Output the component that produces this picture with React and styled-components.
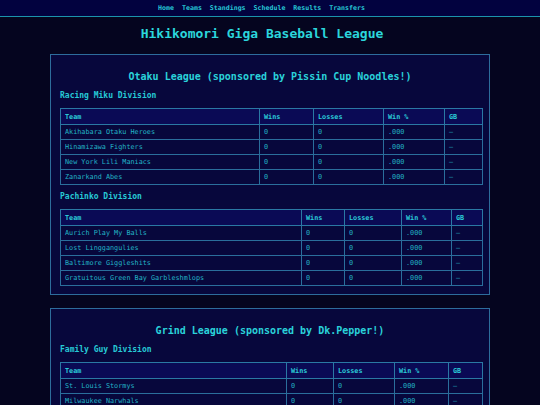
import React from "react";
import styled, { createGlobalStyle } from "styled-components";

const Global = createGlobalStyle`
  html, body { margin: 0; padding: 0; background: #05051f; }
  body { font-family: "DejaVu Sans Mono", "Liberation Mono", monospace; color: #22c8d4; overflow: hidden; }
`;

const Nav = styled.nav`
  height: 16px;
  background: #02023f;
  border-bottom: 1.5px solid #1b94ac;
  display: flex;
  justify-content: center;
  align-items: center;
  gap: 8px;
  padding-right: 17px;
`;

const NavLink = styled.a`
  font-size: 6.6px;
  font-weight: bold;
  color: #26c6d6;
  text-decoration: none;
  line-height: 1;
`;

const Title = styled.h1`
  margin: 0;
  padding: 9px 16px 0 0;
  font-size: 13px;
  line-height: 16px;
  font-weight: bold;
  text-align: center;
  color: #2bd6dc;
`;

const Main = styled.main`
  display: flex;
  flex-direction: column;
  align-items: center;
  gap: 13px;
  padding-top: 12px;
`;

const League = styled.section`
  width: 440px;
  box-sizing: border-box;
  background: #07073c;
  border: 1px solid #2d6c9c;
  padding: 9px 9px 8px;
`;

const LeagueTitle = styled.h2`
  margin: 7px 0 8px;
  font-size: 10px;
  line-height: 12px;
  font-weight: bold;
  text-align: center;
  color: #2ad2da;
`;

const DivisionTitle = styled.h3`
  margin: 0 0 7px;
  font-size: 8px;
  line-height: 10px;
  font-weight: bold;
  color: #26cad6;
`;

const Division = styled.div`
  & + & { margin-top: 7px; }
`;

const Table = styled.table`
  width: 100%;
  table-layout: fixed;
  border-collapse: collapse;
  border: 1px solid #2a78a4;
`;

const Col = styled.col`
  width: ${(p) => p.$w}px;
`;

const HeadCell = styled.th`
  height: 15px;
  padding: 0 4px;
  text-align: left;
  font-size: 6.8px;
  font-weight: bold;
  color: #2acad8;
  background: #0a0a55;
  border: 1px solid #2a78a4;
`;

const Cell = styled.td`
  height: 14px;
  padding: 0 4px;
  font-size: 6.8px;
  color: #22b4c6;
  border: 1px solid #2a6e9c;
  white-space: nowrap;
`;

const leagues = [
  {
    name: "Otaku League (sponsored by Pissin Cup Noodles!)",
    divisions: [
      {
        name: "Racing Miku Division",
        cols: [199, 54, 70, 61, 38],
        teams: ["Akihabara Otaku Heroes", "Hinamizawa Fighters", "New York Lili Maniacs", "Zanarkand Abes"],
      },
      {
        name: "Pachinko Division",
        cols: [241, 43, 57, 50, 31],
        teams: ["Aurich Play My Balls", "Lost Linggangulies", "Baltimore Giggleshits", "Gratuitous Green Bay Garbleshmlops"],
      },
    ],
  },
  {
    name: "Grind League (sponsored by Dk.Pepper!)",
    divisions: [
      {
        name: "Family Guy Division",
        cols: [226, 47, 61, 54, 34],
        teams: ["St. Louis Stormys", "Milwaukee Narwhals", "Quahog Clams", "Spooner Street Giggities"],
      },
    ],
  },
];

const navItems = ["Home", "Teams", "Standings", "Schedule", "Results", "Transfers"];

function Standings({ division }) {
  return (
    <Division>
      <DivisionTitle>{division.name}</DivisionTitle>
      <Table>
        <colgroup>
          {division.cols.map((w, i) => (
            <Col key={i} $w={w} />
          ))}
        </colgroup>
        <thead>
          <tr>
            <HeadCell>Team</HeadCell>
            <HeadCell>Wins</HeadCell>
            <HeadCell>Losses</HeadCell>
            <HeadCell>Win %</HeadCell>
            <HeadCell>GB</HeadCell>
          </tr>
        </thead>
        <tbody>
          {division.teams.map((t) => (
            <tr key={t}>
              <Cell>{t}</Cell>
              <Cell>0</Cell>
              <Cell>0</Cell>
              <Cell>.000</Cell>
              <Cell>–</Cell>
            </tr>
          ))}
        </tbody>
      </Table>
    </Division>
  );
}

export default function App() {
  return (
    <>
      <Global />
      <Nav>
        {navItems.map((n) => (
          <NavLink key={n} href="#">{n}</NavLink>
        ))}
      </Nav>
      <Title>Hikikomori Giga Baseball League</Title>
      <Main>
        {leagues.map((l) => (
          <League key={l.name}>
            <LeagueTitle>{l.name}</LeagueTitle>
            {l.divisions.map((d) => (
              <Standings key={d.name} division={d} />
            ))}
          </League>
        ))}
      </Main>
    </>
  );
}
